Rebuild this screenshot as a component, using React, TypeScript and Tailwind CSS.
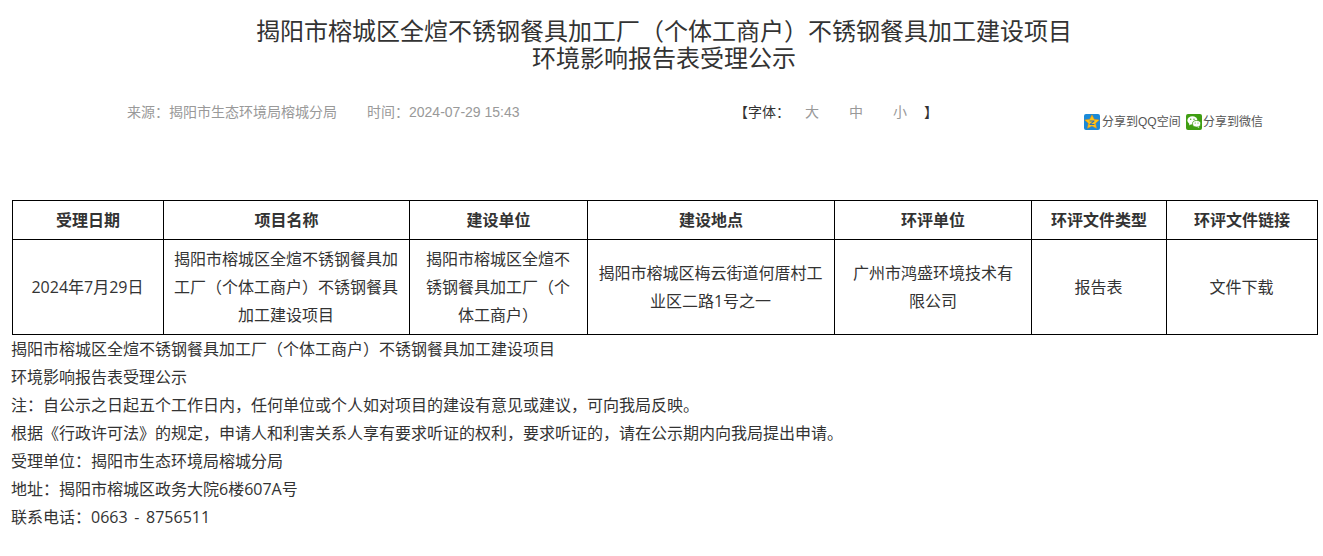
const fontCn = "font-['Liberation_Sans','Noto_Sans_CJK_SC',sans-serif]";
const fontBody = "font-['Open_Sans','Noto_Sans_CJK_SC',sans-serif]";

const headers = ["受理日期", "项目名称", "建设单位", "建设地点", "环评单位", "环评文件类型", "环评文件链接"];
const widths = ["w-[151px]", "w-[246px]", "w-[178px]", "w-[247px]", "w-[197px]", "w-[135px]", "w-[151px]"];
const cells = [
  { text: "2024年7月29日", pad: "pl-[10px] pr-[11px]" },
  { text: "揭阳市榕城区全煊不锈钢餐具加工厂（个体工商户）不锈钢餐具加工建设项目", pad: "pl-[10px] pr-[11px]" },
  { text: "揭阳市榕城区全煊不锈钢餐具加工厂（个体工商户）", pad: "pl-[10px] pr-[11px]" },
  { text: "揭阳市榕城区梅云街道何厝村工业区二路1号之一", pad: "pl-[10px] pr-[11px]" },
  { text: "广州市鸿盛环境技术有限公司", pad: "px-[18px]" },
  { text: "报告表", pad: "pl-[10px] pr-[11px]" },
  { text: "文件下载", pad: "pl-[10px] pr-[11px]" },
];
const notes = [
  "揭阳市榕城区全煊不锈钢餐具加工厂（个体工商户）不锈钢餐具加工建设项目",
  "环境影响报告表受理公示",
  "注：自公示之日起五个工作日内，任何单位或个人如对项目的建设有意见或建议，可向我局反映。",
  "根据《行政许可法》的规定，申请人和利害关系人享有要求听证的权利，要求听证的，请在公示期内向我局提出申请。",
  "受理单位：揭阳市生态环境局榕城分局",
  "地址：揭阳市榕城区政务大院6楼607A号",
  "联系电话：0663 - 8756511",
];

function QzoneIcon() {
  return (
    <svg width="16" height="16" viewBox="0 0 16 16" className="shrink-0">
      <rect x="0" y="0" width="16" height="16" rx="2" fill="#1a8ad8" />
      <path d="M8 .8l2.2 4.4 5 .7-3.6 3.4.9 5L8 12l-4.5 2.3.9-5L.8 5.9l5-.7z" fill="#fcc419" stroke="#e88a10" strokeWidth=".5" />
      <path d="M5.6 6.6h4.8v1L7.2 10h3.2v1H5.6v-1l3.2-2.4H5.6z" fill="#2a6fb8" />
    </svg>
  );
}

function WechatIcon() {
  return (
    <svg width="16" height="16" viewBox="0 0 16 16" className="shrink-0">
      <rect x="0" y="0" width="16" height="16" rx="2" fill="#3f9e12" />
      <ellipse cx="6.4" cy="6.4" rx="5" ry="4.1" fill="#fff" />
      <path d="M3.6 9.2l-.6 2.2 2.4-1.3z" fill="#fff" />
      <ellipse cx="10.6" cy="9.8" rx="4.1" ry="3.3" stroke="#3f9e12" strokeWidth=".8" fill="#fff" />
      <path d="M12.6 12.4l.7 1.5-2.1-1z" fill="#fff" />
      <circle cx="4.7" cy="5.2" r=".7" fill="#3f9e12" />
      <circle cx="8" cy="5.2" r=".7" fill="#3f9e12" />
      <circle cx="9.2" cy="9" r=".55" fill="#3f9e12" />
      <circle cx="12" cy="9" r=".55" fill="#3f9e12" />
    </svg>
  );
}

export default function App() {
  return (
    <div className={`${fontCn} w-[1323px] h-[556px] overflow-hidden bg-white text-[#333]`}>
      <div className="pt-[18px] text-center text-2xl leading-[27px] pl-[5px]">
        <h1>揭阳市榕城区全煊不锈钢餐具加工厂（个体工商户）不锈钢餐具加工建设项目</h1>
        <h1>环境影响报告表受理公示</h1>
      </div>

      <div className="flex h-[128px] pt-[29px] text-sm">
        <div className="w-[614px] pl-[127px] leading-[22px] text-[#999] flex">
          <span>来源：揭阳市生态环境局榕城分局</span>
          <span className="ml-[30px]">时间：2024-07-29 15:43</span>
        </div>
        <div className="w-[344px] pl-[120px] leading-[22px] flex text-[#999] shrink-0">
          <span className="text-[#333] w-[70px]">【字体：</span>
          <span className="ml-[1px] w-[44px]">大</span>
          <span className="w-[44px]">中</span>
          <span className="w-[31px]">小</span>
          <span className="text-[#333]">】</span>
        </div>
        <div className="flex items-center h-[16px] mt-[13px] ml-[126px] text-xs text-[#555]">
          <QzoneIcon />
          <span className="ml-[2px] w-[84px]">分享到QQ空间</span>
          <WechatIcon />
          <span className="ml-[1px]">分享到微信</span>
        </div>
      </div>

      <div className="px-3">
        <table className={`${fontBody} border-collapse table-fixed w-[1305px] text-base border border-black`}>
          <thead>
            <tr className="h-[39px]">
              {headers.map((h, i) => (
                <th key={h} className={`${widths[i]} border border-black font-bold text-center`}>
                  {h}
                </th>
              ))}
            </tr>
          </thead>
          <tbody>
            <tr>
              {cells.map((c) => (
                <td key={c.text} className={`${c.pad} border border-black text-center leading-[28px] py-[5px]`}>
                  {c.text}
                </td>
              ))}
            </tr>
          </tbody>
        </table>
        <div className={`${fontBody} text-base leading-7 -ml-px [word-spacing:2.5px]`}>
          {notes.map((n) => (
            <p key={n}>{n}</p>
          ))}
        </div>
      </div>
    </div>
  );
}
